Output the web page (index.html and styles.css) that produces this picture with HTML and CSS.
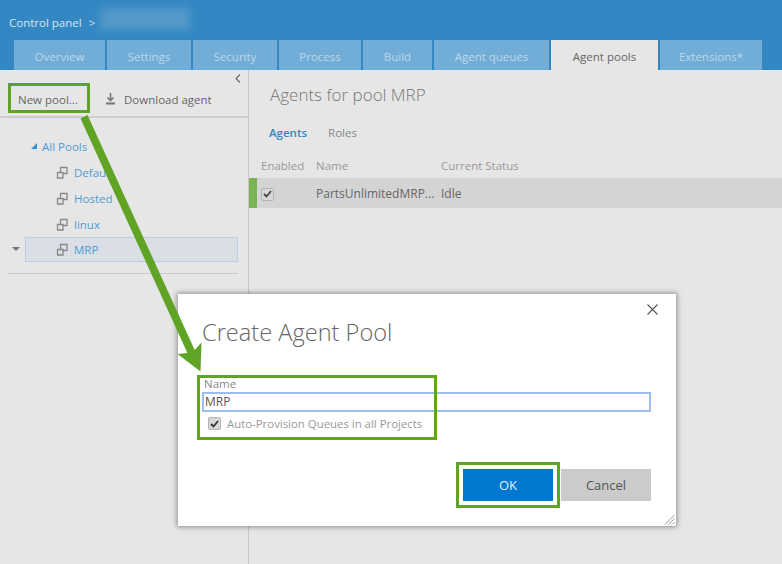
FILE: index.html
```html
<!DOCTYPE html>
<html lang="en">
<head>
    <meta charset="UTF-8">
    <title>Agent pools</title>
    <link rel="stylesheet" href="styles.css">
</head>
<body>

    <div class="header">
        <div class="crumbs">
            <span>Control panel</span>
            <span class="crumb-sep">&gt;</span>
            <span class="crumb-blur"></span>
        </div>
        <div class="tabs">
            <div class="tab tab-overview">Overview</div>
            <div class="tab tab-settings">Settings</div>
            <div class="tab tab-security">Security</div>
            <div class="tab tab-process">Process</div>
            <div class="tab tab-build">Build</div>
            <div class="tab tab-queues">Agent queues</div>
            <div class="tab tab-pools active">Agent pools</div>
            <div class="tab tab-ext">Extensions*</div>
        </div>
    </div>

    <div class="main">
        <div class="left">
            <div class="collapse">
                <svg width="6" height="9" viewBox="0 0 6 9"><path d="M5 .5 1 4.5l4 4" fill="none" stroke="#666" stroke-width="1.1"/></svg>
            </div>
            <div class="toolbar">
                <div class="tool tool-new">New pool...</div>
                <div class="tool">
                    <svg width="11" height="12" viewBox="0 0 11 12"><path d="M5.5 0v7M2.5 4.5l3 3 3-3" fill="none" stroke="#777" stroke-width="1.6"/><path d="M1 10.5h9" stroke="#777" stroke-width="2"/></svg>
                    Download agent
                </div>
            </div>
            <div class="tree">
                <div class="row row-root"><span class="tri"></span>All Pools</div>
                <div class="row row-pool">
                    <svg class="pool-icon" width="13" height="13" viewBox="0 0 13 13"><use href="#pool"/></svg>Default
                </div>
                <div class="row row-pool">
                    <svg class="pool-icon" width="13" height="13" viewBox="0 0 13 13"><use href="#pool"/></svg>Hosted
                </div>
                <div class="row row-pool">
                    <svg class="pool-icon" width="13" height="13" viewBox="0 0 13 13"><use href="#pool"/></svg>linux
                </div>
                <div class="row row-pool selected">
                    <span class="menu-tri"></span>
                    <svg class="pool-icon" width="13" height="13" viewBox="0 0 13 13"><use href="#pool"/></svg>MRP
                </div>
            </div>
            <div class="tree-line"></div>
        </div>

        <div class="right">
            <h2>Agents for pool MRP</h2>
            <div class="subtabs">
                <span class="subtab on">Agents</span>
                <span class="subtab">Roles</span>
            </div>
            <div class="grid-head">
                <span class="col-enabled">Enabled</span>
                <span class="col-name">Name</span>
                <span>Current Status</span>
            </div>
            <div class="grid-row">
                <span class="col-enabled"><span class="check"><svg width="9" height="8" viewBox="0 0 9 8"><path d="M1 4l2.500 2.500L8 1" fill="none" stroke="#444" stroke-width="1.800"/></svg></span></span>
                <span class="col-name">PartsUnlimitedMRP...</span>
                <span>Idle</span>
            </div>
        </div>
    </div>

    <div class="dialog">
        <svg class="close" width="11" height="11" viewBox="0 0 11 11"><path d="M.5.5l10 10M10.500.5l-10 10" stroke="#555" stroke-width="1.100"/></svg>
        <h1>Create Agent Pool</h1>
        <div class="field-label">Name</div>
        <div class="field-input">MRP</div>
        <div class="auto">
            <span class="check"><svg width="9" height="8" viewBox="0 0 9 8"><path d="M1 4l2.500 2.500L8 1" fill="none" stroke="#333" stroke-width="1.800"/></svg></span>
            Auto-Provision Queues in all Projects
        </div>
        <div class="buttons">
            <div class="btn btn-ok">OK</div>
            <div class="btn btn-cancel">Cancel</div>
        </div>
        <svg class="grip" width="11" height="11" viewBox="0 0 11 11"><path d="M10.500 1 1 10.500M10.500 4.500l-6 6M10.500 8l-2.500 2.500" stroke="#999" stroke-width="1"/></svg>
    </div>

    <!-- callouts drawn on top of the screenshot -->
    <div class="mark mark-new"></div>
    <div class="mark mark-name"></div>
    <div class="mark mark-ok"></div>
    <svg class="arrow" width="782" height="564" viewBox="0 0 782 564">
        <polygon points="80.500,118.500 87.500,115 194.700,350 201.500,342.500 200.500,371.500 177.500,354 187.400,353" fill="#5fa424"/>
    </svg>

    <svg width="0" height="0" class="defs">
        <symbol id="pool" viewBox="0 0 13 13">
            <path d="M1.500 6.500h5.500v5.500H1.500zM4.500 6.500V1.500H11V7.500H7" fill="none" stroke="#888" stroke-width="1.300"/>
        </symbol>
    </svg>

</body>
</html>
```

FILE: styles.css
```css
html, body {
    margin: 0;
    padding: 0;
}
body {
    width: 782px;
    height: 564px;
    overflow: hidden;
    position: relative;
    background-color: #e6e6e6;
    font-family: "Open Sans", "Noto Sans", sans-serif;
    font-size: 11.5px;
    color: #666666;
}
.header {
    height: 70px;
    background-color: #3387c2;
    display: flex;
    flex-direction: column;
}
.crumbs {
    height: 40px;
    display: flex;
    align-items: center;
    padding: 4px 0 0 9px;
    box-sizing: border-box;
    color: #d6e7f3;
    overflow: hidden;
}
.crumb-sep {
    margin-left: 7px;
}
.crumb-blur {
    width: 90px;
    height: 22px;
    margin: -6px 0 0 5px;
    background-color: #5499cb;
    filter: blur(4px);
}
.tabs {
    height: 30px;
    display: flex;
    gap: 2px;
    padding-left: 14px;
}
.tab {
    background-color: #71add6;
    color: #bdd8ea;
    display: flex;
    align-items: center;
    justify-content: center;
    padding-top: 2px;
    box-sizing: border-box;
}
.tab-overview { width: 91px; }
.tab-settings { width: 84px; }
.tab-security { width: 84px; }
.tab-process { width: 82px; }
.tab-build { width: 69px; }
.tab-queues { width: 115px; }
.tab-pools { width: 107px; }
.tab-ext { width: 102px; }
.tab.active {
    background-color: #e6e6e6;
    color: #666666;
}
.main {
    height: 494px;
    display: flex;
}
.left {
    width: 248px;
    position: relative;
    border-right: 1px solid #c8c8c8;
    box-sizing: content-box;
}
.collapse {
    position: absolute;
    top: 4px;
    right: 7px;
    line-height: 0;
}
.toolbar {
    height: 48px;
    border-bottom: 2px solid #cccccc;
    box-sizing: border-box;
    display: flex;
    align-items: center;
    padding: 12px 0 0 18px;
    color: #666666;
}
.tool {
    display: flex;
    align-items: center;
    gap: 8px;
}
.tool-new {
    width: 87px;
}
.tree {
    padding-top: 15px;
}
.row {
    height: 26px;
    display: flex;
    align-items: center;
    color: #4f9ad2;
    position: relative;
}
.row-root {
    padding-left: 31px;
}
.tri {
    width: 0;
    height: 0;
    border-style: solid;
    border-width: 0 0 6px 6px;
    border-color: transparent transparent #3f8ccb transparent;
    margin-right: 5px;
}
.row-pool {
    padding-left: 56px;
}
.pool-icon {
    margin-right: 5px;
}
.selected {
    margin-left: 25px;
    width: 213px;
    height: 25px;
    padding-left: 30px;
    box-sizing: border-box;
    background-color: #dadfe7;
    border: 1px solid #b9cfe4;
}
.menu-tri {
    position: absolute;
    left: -14px;
    top: 9px;
    border-style: solid;
    border-width: 4px 4px 0 4px;
    border-color: #777777 transparent transparent transparent;
}
.tree-line {
    height: 1px;
    margin: 11px 10px 0 8px;
    background-color: #cccccc;
}
.right {
    flex: 1;
}
.right h2 {
    margin: 13px 0 0 21px;
    font-size: 17px;
    font-weight: 300;
    line-height: 24px;
    color: #777777;
}
.subtabs {
    margin: 18px 0 0 20px;
    display: flex;
    gap: 21px;
    line-height: 16px;
    color: #888888;
}
.subtab.on {
    color: #3387c2;
    font-weight: 600;
}
.grid-head, .grid-row {
    display: flex;
    align-items: center;
}
.grid-head {
    height: 18px;
    margin-top: 15px;
    padding-left: 12px;
    color: #999999;
}
.grid-row {
    height: 30px;
    margin-top: 4px;
    padding-left: 4px;
    background-color: #d4d4d4;
    border-left: 8px solid #7ab354;
    font-size: 12px;
    color: #666666;
}
.col-enabled {
    width: 55px;
}
.grid-row .col-name {
    width: 125px;
}
.grid-head .col-name {
    width: 125px;
}
.check {
    width: 11px;
    height: 11px;
    display: inline-flex;
    align-items: center;
    justify-content: center;
    background-color: #d8d8d8;
    border: 1px solid #b4b4b4;
    border-radius: 2px;
    vertical-align: middle;
}
.dialog {
    position: absolute;
    left: 178px;
    top: 294px;
    width: 498px;
    height: 232px;
    box-sizing: border-box;
    padding: 21px 25px 0 24px;
    background-color: #ffffff;
    box-shadow: 0 0 5px 1px rgba(0, 0, 0, 0.4);
}
.dialog h1 {
    margin: 0;
    font-size: 23.6px;
    font-weight: 300;
    line-height: 34px;
    color: #666666;
}
.close {
    position: absolute;
    top: 10px;
    right: 18px;
}
.field-label {
    margin: 28px 0 2px 2px;
    line-height: 13px;
    color: #888888;
}
.field-input {
    height: 20px;
    box-sizing: border-box;
    border: 2px solid #9dbcf0;
    padding-left: 1px;
    line-height: 16px;
    font-size: 12px;
    color: #555555;
}
.auto {
    display: flex;
    align-items: center;
    gap: 6px;
    margin: 3px 0 0 6px;
    line-height: 17px;
    font-size: 11.4px;
    color: #999999;
}
.buttons {
    display: flex;
    justify-content: flex-end;
    gap: 8px;
    margin-top: 37px;
}
.btn {
    width: 90px;
    height: 32px;
    display: flex;
    align-items: center;
    justify-content: center;
    font-size: 13px;
}
.btn-ok {
    background-color: #0078cf;
    color: #e4f1fa;
}
.btn-cancel {
    background-color: #cbcbcb;
    color: #555555;
}
.grip {
    position: absolute;
    right: 1px;
    bottom: 1px;
}
.mark {
    position: absolute;
    box-sizing: border-box;
    border: 3px solid #5fa424;
}
.mark-new {
    left: 8px;
    top: 83px;
    width: 82px;
    height: 30px;
}
.mark-name {
    left: 197px;
    top: 375px;
    width: 240px;
    height: 65px;
}
.mark-ok {
    left: 456px;
    top: 462px;
    width: 104px;
    height: 46px;
}
.arrow {
    position: absolute;
    left: 0;
    top: 0;
}
.defs {
    position: absolute;
}
```
